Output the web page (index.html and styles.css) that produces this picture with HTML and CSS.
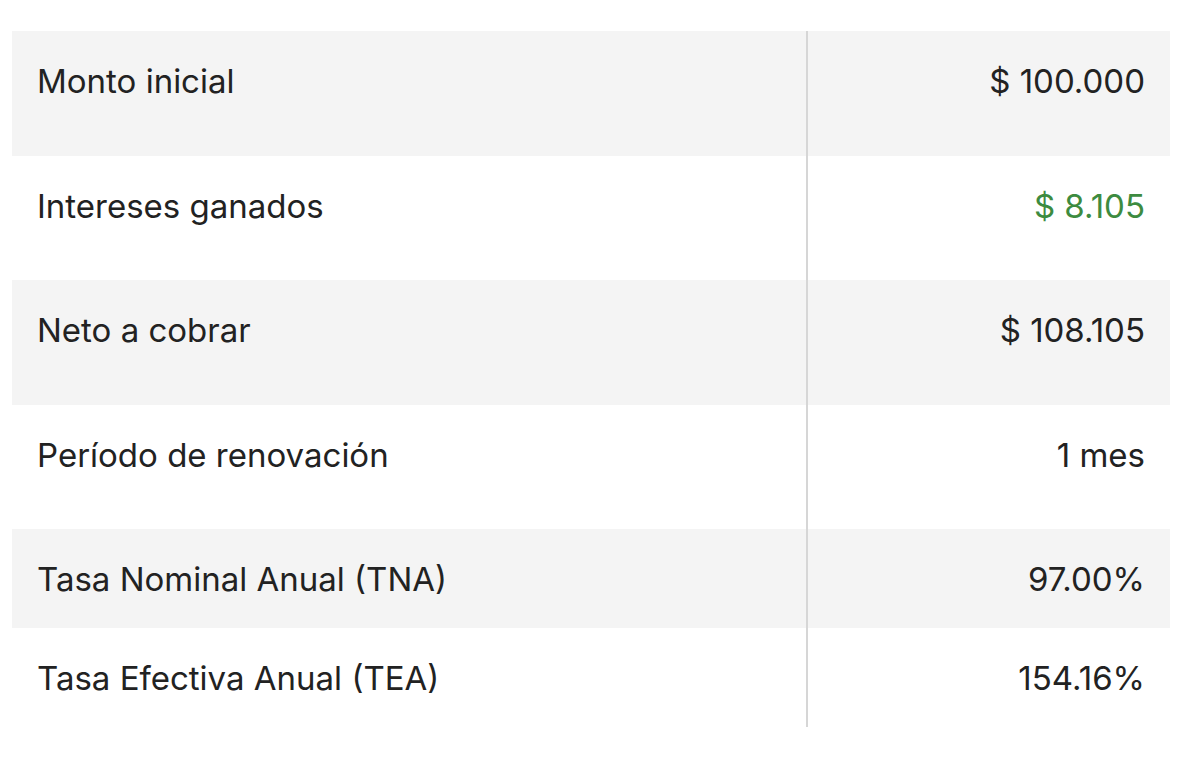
FILE: index.html
```html
<!DOCTYPE html>
<html lang="es">
<head>
<meta charset="utf-8">
<link rel="stylesheet" href="styles.css">
</head>
<body>
<div class="table">
  <div class="row shade tall"><div class="label">Monto inicial</div><div class="value">$ 100.000</div></div>
  <div class="row tall"><div class="label">Intereses ganados</div><div class="value green">$ 8.105</div></div>
  <div class="row shade tall"><div class="label">Neto a cobrar</div><div class="value">$ 108.105</div></div>
  <div class="row tall"><div class="label">Período de renovación</div><div class="value">1 mes</div></div>
  <div class="row shade"><div class="label">Tasa Nominal Anual (TNA)</div><div class="value">97.00%</div></div>
  <div class="row"><div class="label">Tasa Efectiva Anual (TEA)</div><div class="value">154.16%</div></div>
</div>
</body>
</html>
```
FILE: styles.css
```css
html, body { margin: 0; padding: 0; background: #fff; }
body { font-family: Inter, "Noto Sans", sans-serif; color: #222; }
.table { margin: 31px 30px 0 12px; display: flex; flex-direction: column; }
.row { display: grid; grid-template-columns: 796px 1fr; height: 99px; }
.row.tall { height: 124.5px; }
.shade { background: #f4f4f4; }
.label, .value { font-size: 33px; line-height: 40px; padding-top: 30px; }
.label { padding-left: 25px; border-right: 2px solid #d6d6d6; }
.value { text-align: right; padding-right: 25px; }
.green { color: #3d8b40; }
```
